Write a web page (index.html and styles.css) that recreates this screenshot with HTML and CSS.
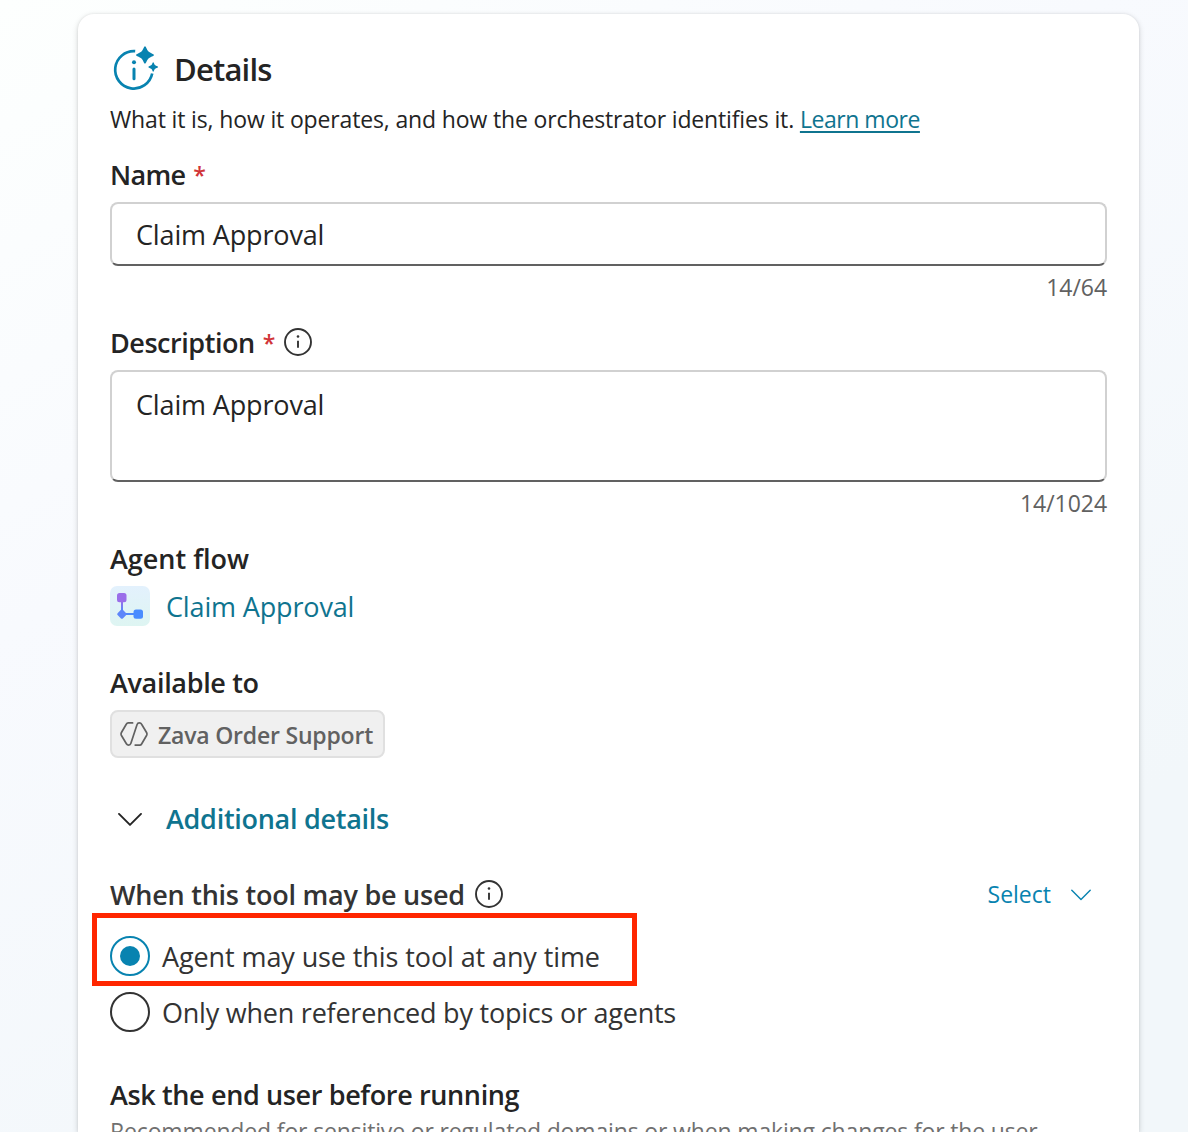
FILE: index.html
```html
<!DOCTYPE html>
<html lang="en">
<head>
<meta charset="utf-8">
<title>Details</title>
<link rel="stylesheet" href="styles.css">
</head>
<body>
<main class="card">
  <header class="title-row">
    <svg class="title-icon" viewBox="0 0 48 48" fill="none">
      <path d="M25.2 5.2 A18.7 18.7 0 1 0 42.2 27.6" stroke="#0883b0" stroke-width="2.7"/>
      <path d="M24 23v9.8" stroke="#0883b0" stroke-width="3" stroke-linecap="round"/>
      <circle cx="24" cy="16.3" r="2" fill="#0883b0"/>
      <path d="M35 .2c1 0 1.800 3.500 3.500 5.200c1.700 1.700 5.500 2.500 5.500 3.600s-3.800 1.900-5.500 3.600c-1.700 1.700-2.500 5.100-3.500 5.100s-1.800-3.400-3.500-5.100c-1.700-1.700-5.500-2.500-5.500-3.600s3.800-1.900 5.500-3.600c1.700-1.700 2.500-5.200 3.500-5.200z" fill="#0883b0"/>
      <path d="M43.200 16.200c.6 0 .9 1.800 1.700 2.700c.9.900 3.200 1.200 3.200 2.100s-2.300 1.200-3.200 2.100c-.8.9-1.100 2.700-1.700 2.700s-.9-1.800-1.700-2.700c-.9-.9-3.200-1.200-3.200-2.100s2.300-1.200 3.200-2.100c.8-.9 1.100-2.700 1.700-2.700z" fill="#0883b0"/>
    </svg>
    <h1 class="title">Details</h1>
  </header>
  <p class="intro">What it is, how it operates, and how the orchestrator identifies it. <a class="learn">Learn more</a></p>

  <div class="label"><span class="t-name">Name</span> <span class="required">*</span></div>
  <div class="input">Claim Approval</div>
  <div class="counter">14/64</div>

  <div class="label"><span class="t-desc">Description</span> <span class="required">*</span>
    <svg class="info" viewBox="0 0 28 28" fill="none" stroke="#333"><circle cx="14" cy="14" r="13" stroke-width="1.900"/><path d="M14 12.800v7" stroke-width="1.900"/><circle cx="14" cy="8.500" r="1.300" fill="#333" stroke="none"/></svg>
  </div>
  <div class="input textarea">Claim Approval</div>
  <div class="counter">14/1024</div>

  <div class="label">Agent flow</div>
  <div class="flow-row">
    <svg class="flow-icon" viewBox="0 0 40 40">
      <defs>
        <linearGradient id="tile" x1="0" y1="0" x2="0" y2="1"><stop offset="0" stop-color="#e3f1fd"/><stop offset="1" stop-color="#def5f2"/></linearGradient>
        <linearGradient id="link" x1="0" y1="0" x2="0" y2="1"><stop offset="0" stop-color="#9d6be8"/><stop offset="1" stop-color="#5c87fb"/></linearGradient>
      </defs>
      <rect width="40" height="40" rx="7" fill="url(#tile)"/>
      <path d="M11 15h2v9h-2z" fill="url(#link)"/>
      <path d="M15 27h10v2H15z" fill="#5089fb"/>
      <rect x="7" y="7" width="9.500" height="9.300" rx="2.500" fill="#9a6ee9"/>
      <rect x="23.500" y="23.500" width="9.500" height="9.300" rx="2.500" fill="#4a8cff"/>
      <rect x="8.200" y="24.400" width="7.400" height="7.400" rx="1.300" transform="rotate(45 11.900 28.100)" fill="#5e86fa"/>
    </svg>
    <a class="link">Claim Approval</a>
  </div>

  <div class="label label-avail">Available to</div>
  <div class="chip">
    <svg class="chip-icon" viewBox="0 0 28 24" fill="none" stroke="#616161" stroke-width="1.700" stroke-linejoin="round" stroke-linecap="round">
      <path d="M12.600.9H8.200Q7 .9 6.400 2L1.300 10.800Q.8 12 1.300 13.200L6.400 21.800Q7.200 23.100 8.700 23.100Q10.300 23.100 10.900 21.300L17 2.700Q17.600.9 19.300.9Q20.900.9 21.600 2.200L26.700 10.800Q27.200 12 26.700 13.200L21.600 22Q21 23.100 19.800 23.100H15.200"/>
    </svg>
    <span class="chip-text">Zava Order Support</span>
  </div>

  <div class="expander">
    <svg class="chevron" viewBox="0 0 24 14" fill="none" stroke="#242424" stroke-width="1.900" stroke-linecap="round" stroke-linejoin="round"><path d="M1 1.900l11 11 11-11"/></svg>
    <span>Additional details</span>
  </div>

  <div class="usage-row">
    <div class="label soft"><span class="t-when">When this tool may be used</span>
      <svg class="info" viewBox="0 0 28 28" fill="none" stroke="#333"><circle cx="14" cy="14" r="13" stroke-width="1.900"/><path d="M14 12.800v7" stroke-width="1.900"/><circle cx="14" cy="8.500" r="1.300" fill="#333" stroke="none"/></svg>
    </div>
    <div class="select"><span>Select</span>
      <svg class="select-chevron" viewBox="0 0 20 12" fill="none" stroke="#0883b0" stroke-width="1.400" stroke-linecap="round" stroke-linejoin="round"><path d="M.8 1.200l9.200 9.400 9.200-9.400"/></svg>
    </div>
  </div>

  <div class="options">
    <div class="option"><span class="radio checked"></span><span class="option-text t-any">Agent may use this tool at any time</span><div class="highlight"></div></div>
    <div class="option"><span class="radio"></span><span class="option-text t-only">Only when referenced by topics or agents</span></div>
  </div>

  <div class="label label-ask">Ask the end user before running</div>
  <p class="hint">Recommended for sensitive or regulated domains or when making changes for the user</p>
</main>
</body>
</html>
```
FILE: styles.css
```css
* { box-sizing: border-box; }
body {
  margin: 0;
  height: 1132px;
  overflow: hidden;
  padding: 14px 49px 0 78px;
  font-family: "Open Sans", "Noto Sans", sans-serif;
  font-size: 27px;
  line-height: 40px;
  color: #242424;
  background: linear-gradient(150deg, #fdfffe 0%, #f8fafe 35%, #f2f7fa 80%);
  white-space: nowrap;
}
h1, p { margin: 0; }
.card {
  height: 1118px;
  padding: 32px 32px 0;
  overflow: hidden;
  border-radius: 16px 16px 0 0;
  background: #fff;
  box-shadow: 0 2px 6px rgba(0, 0, 0, .16), 0 0 3px rgba(0, 0, 0, .08);
}
.title-row { display: flex; gap: 16px; height: 48px; }
.title-icon { width: 48px; height: 48px; }
.title { font-size: 31px; font-weight: 600; line-height: 46px; letter-spacing: -.8px; }
.intro { margin-top: 9px; font-size: 23px; line-height: 32px; letter-spacing: -.145px; }
.learn { color: #0f748f; letter-spacing: -.46px; text-decoration: underline; text-decoration-thickness: 2px; text-underline-offset: 3px; }
.label { display: flex; align-items: center; margin-top: 20px; height: 40px; font-weight: 600; }
.t-name { letter-spacing: -.7px; }
.t-desc { letter-spacing: -.46px; }
.t-when { letter-spacing: -.24px; }
.required { margin-left: 8px; color: #d13438; font-size: 23px; font-weight: 600; }
.info { width: 28px; height: 28px; margin: -2px 0 0 10px; }
.required + .info { margin-left: 9px; }
.input {
  height: 64px;
  margin-top: 7px;
  padding: 11px 24px;
  border: 2px solid #d1d1d1;
  border-bottom-color: #616161;
  border-radius: 8px;
  letter-spacing: -.15px;
}
.textarea { height: 112px; padding-top: 13px; }
.counter { margin-top: 5px; font-size: 23px; line-height: 32px; letter-spacing: -.05px; text-align: right; color: #616161; }
.flow-row { display: flex; gap: 16px; height: 40px; margin-top: 7px; }
.flow-icon { width: 40px; height: 40px; }
.link { color: #0f748f; line-height: 42px; letter-spacing: -.15px; }
.label-avail { margin-top: 37px; letter-spacing: -.33px; }
.chip {
  display: flex;
  align-items: center;
  gap: 10px;
  width: 275px;
  height: 48px;
  margin-top: 7px;
  padding-left: 8px;
  border: 2px solid #e0e0e0;
  border-radius: 8px;
  background: #f0f0f0;
  color: #616161;
  font-size: 23px;
  font-weight: 600;
  letter-spacing: -.2px;
}
.chip-icon { width: 28px; height: 24px; }
.chip-text { padding-top: 2px; }
.expander { display: flex; align-items: center; gap: 24px; margin-top: 41px; padding-left: 8px; color: #0f748f; font-weight: 600; letter-spacing: -.28px; }
.chevron { width: 24px; height: 14px; }
.usage-row { display: flex; justify-content: space-between; margin-top: 36px; padding-right: 16px; }
.usage-row .label { margin-top: 0; }
.soft { color: #333; }
.select { display: flex; align-items: center; gap: 20px; height: 37px; color: #0883b0; font-size: 23px; }
.select-chevron { width: 20px; height: 12px; margin-top: 3px; }
.options { display: grid; gap: 16px; margin-top: 21px; color: #333; }
.option { position: relative; display: flex; gap: 12px; height: 40px; }
.option-text { line-height: 42px; }
.t-any { letter-spacing: -.1px; }
.t-only { letter-spacing: -.23px; }
.radio { display: grid; place-items: center; width: 40px; height: 40px; border: 2px solid #333; border-radius: 50%; }
.checked { border-color: #0883b0; }
.checked::after { content: ""; width: 20px; height: 20px; border-radius: 50%; background: #0883b0; }
.highlight { position: absolute; left: -18px; top: -23px; width: 544.5px; height: 73px; border: 5px solid #ff2600; }
.label-ask { margin-top: 43px; letter-spacing: -.365px; }
.hint { height: 18px; font-size: 23px; line-height: 32px; letter-spacing: -.15px; color: #707070; }
```
